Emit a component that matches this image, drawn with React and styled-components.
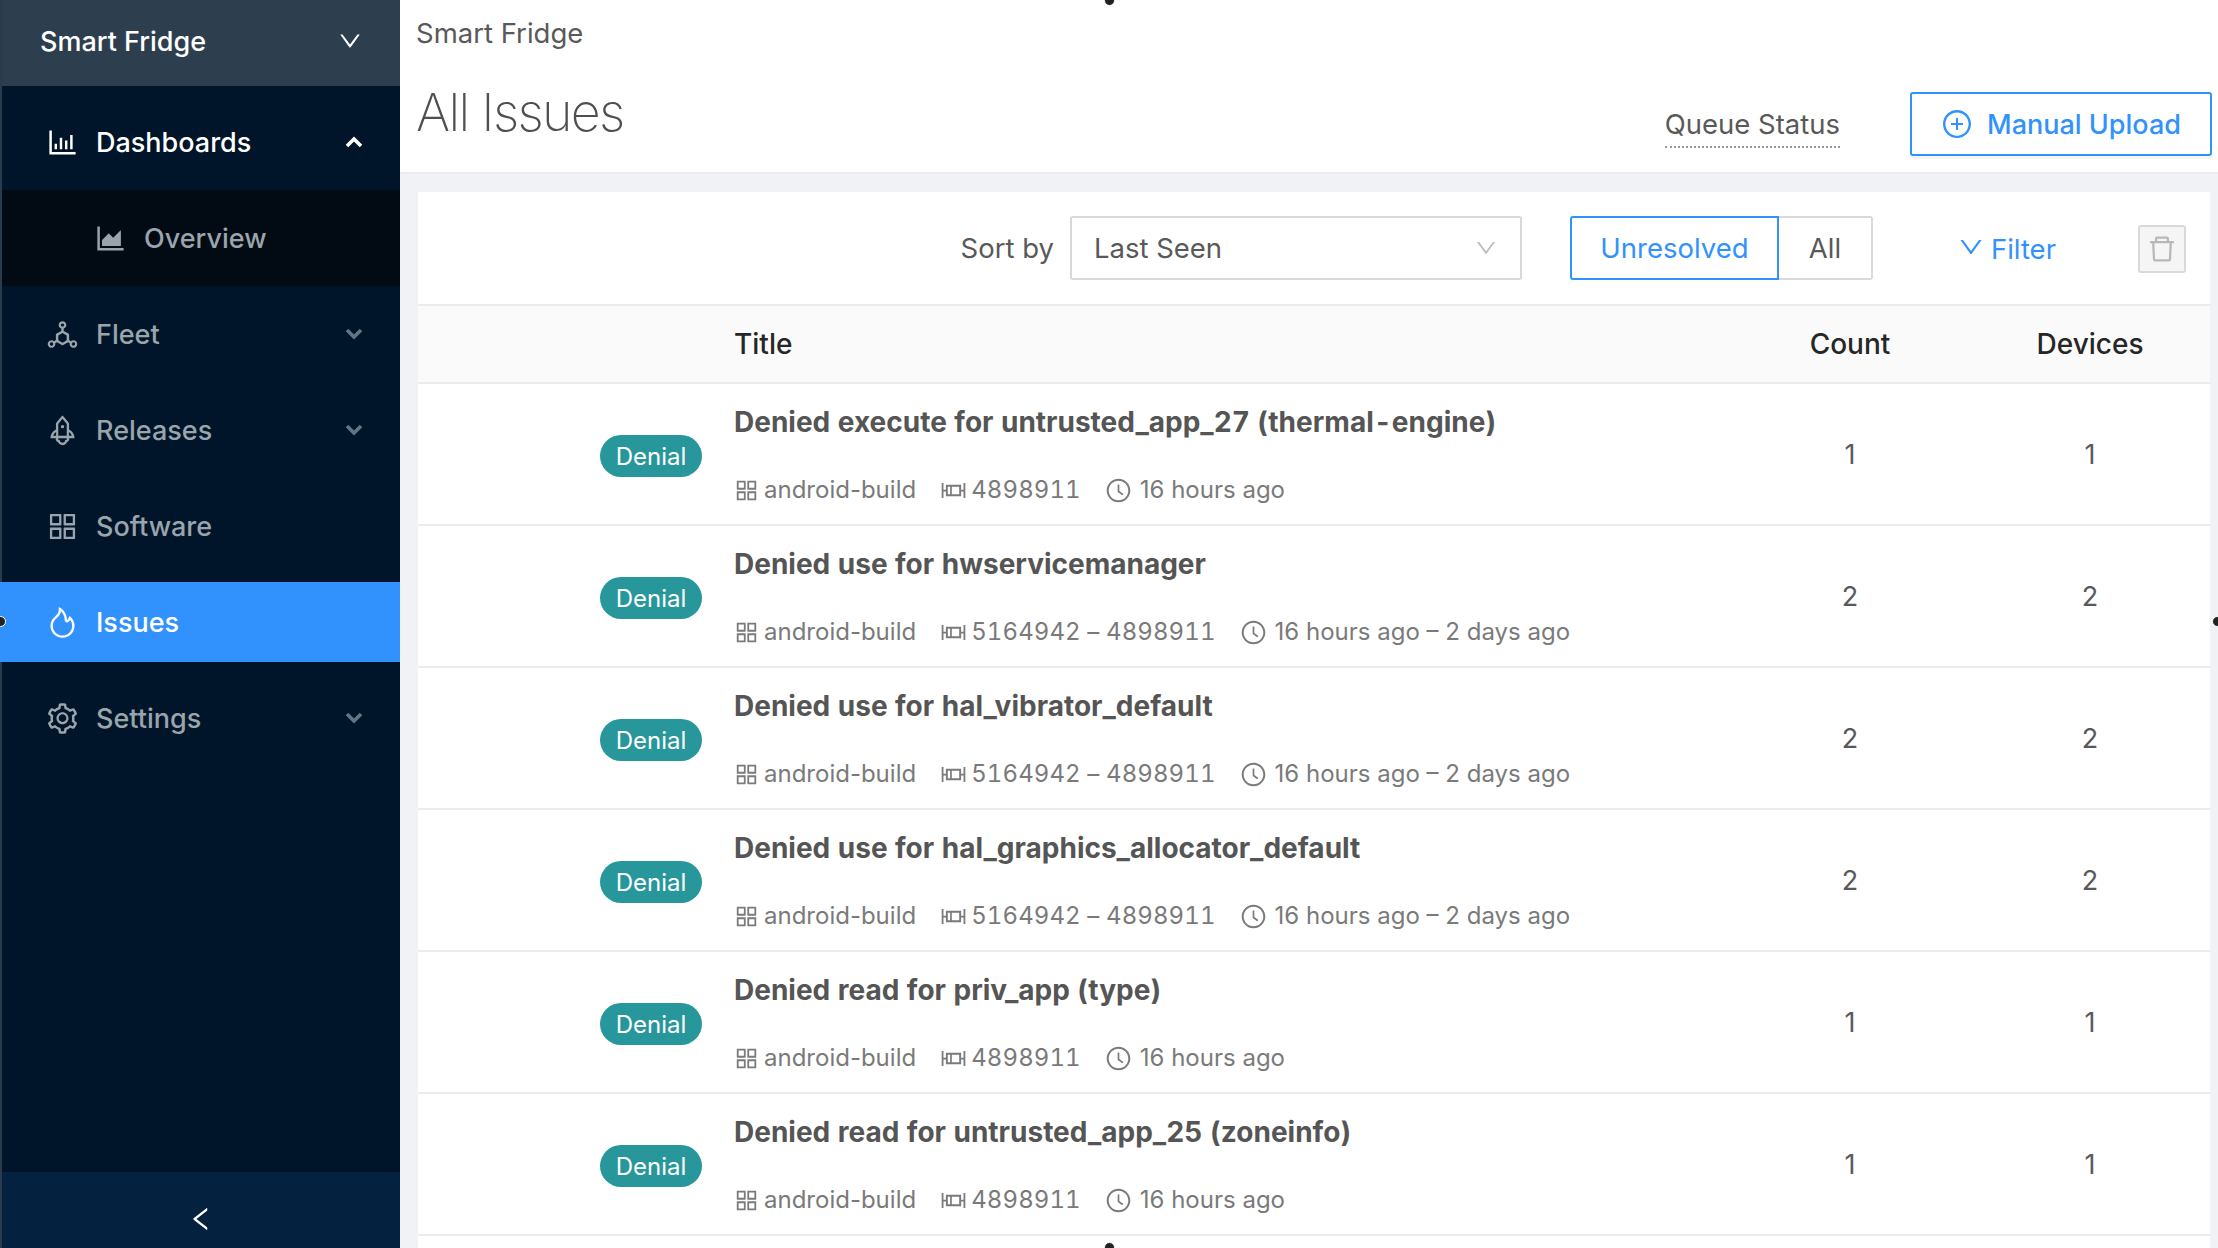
import React from 'react';
import styled, {createGlobalStyle} from 'styled-components';
import {
    AiOutlineBarChart, AiOutlineAreaChart, AiOutlineDeploymentUnit, AiOutlineRocket,
    AiOutlineAppstore, AiOutlineFire, AiOutlineSetting, AiOutlineDown, AiOutlineLeft,
    AiOutlinePlusCircle, AiOutlineDelete, AiOutlineClockCircle, AiOutlineBoxPlot,
} from 'react-icons/ai';

const issues = [
    {title: 'Denied execute for untrusted_app_27 (thermal-engine)', build: '4898911', seen: '16 hours ago', count: 1},
    {title: 'Denied use for hwservicemanager', build: '5164942 – 4898911', seen: '16 hours ago – 2 days ago', count: 2},
    {title: 'Denied use for hal_vibrator_default', build: '5164942 – 4898911', seen: '16 hours ago – 2 days ago', count: 2},
    {title: 'Denied use for hal_graphics_allocator_default', build: '5164942 – 4898911', seen: '16 hours ago – 2 days ago', count: 2},
    {title: 'Denied read for priv_app (type)', build: '4898911', seen: '16 hours ago', count: 1},
    {title: 'Denied read for untrusted_app_25 (zoneinfo)', build: '4898911', seen: '16 hours ago', count: 1},
];

const nav = [
    {label: 'Fleet', Icon: AiOutlineDeploymentUnit, arrow: true},
    {label: 'Releases', Icon: AiOutlineRocket, arrow: true},
    {label: 'Software', Icon: AiOutlineAppstore},
    {label: 'Issues', Icon: AiOutlineFire, active: true},
    {label: 'Settings', Icon: AiOutlineSetting, arrow: true},
];

// small bold chevron used by the menu rows
const Chevron = ({up}) => (
    <ArrowSvg viewBox="0 0 18 12">
        <polyline points={up ? '2,10 9,3 16,10' : '2,2 9,9 16,2'} fill="none" stroke="currentColor" strokeWidth="3.6" />
    </ArrowSvg>
);

const App = () => {
    return (
        <>
        <GlobalStyle />
        <Page>
            <Sidebar>
                <AppSelect>
                    <span>Smart Fridge</span>
                    <AiOutlineDown />
                </AppSelect>
                <Menu>
                    <MenuItem $open>
                        <MenuIcon><AiOutlineBarChart /></MenuIcon>
                        <MenuLabel>Dashboards</MenuLabel>
                        <Chevron up />
                    </MenuItem>
                    <SubItem>
                        <MenuIcon><AiOutlineAreaChart /></MenuIcon>
                        <MenuLabel>Overview</MenuLabel>
                    </SubItem>
                    {nav.map(({label, Icon, arrow, active}) => (
                        <MenuItem key={label} $active={active}>
                            <MenuIcon><Icon /></MenuIcon>
                            <MenuLabel>{label}</MenuLabel>
                            {arrow && <Chevron />}
                        </MenuItem>
                    ))}
                </Menu>
                <Collapse><AiOutlineLeft /></Collapse>
            </Sidebar>
            <Main>
                <TopBar>
                    <Crumb>Smart Fridge</Crumb>
                    <TitleRow>
                        <PageTitle>All Issues</PageTitle>
                        <TopActions>
                            <QueueLink>Queue Status</QueueLink>
                            <UploadButton><AiOutlinePlusCircle />Manual Upload</UploadButton>
                        </TopActions>
                    </TitleRow>
                </TopBar>
                <Card>
                    <Toolbar>
                        <SortLabel>Sort by</SortLabel>
                        <Select>
                            <span>Last Seen</span>
                            <AiOutlineDown />
                        </Select>
                        <Segments>
                            <Segment $selected>Unresolved</Segment>
                            <Segment>All</Segment>
                        </Segments>
                        <FilterLink><AiOutlineDown />Filter</FilterLink>
                        <TrashButton><AiOutlineDelete /></TrashButton>
                    </Toolbar>
                    <HeadRow>
                        <span />
                        <HeadCell>Title</HeadCell>
                        <HeadCell $center>Count</HeadCell>
                        <HeadCell $center>Devices</HeadCell>
                    </HeadRow>
                    {issues.map(issue => (
                        <Row key={issue.title}>
                            <BadgeCell><Badge>Denial</Badge></BadgeCell>
                            <Info>
                                <IssueTitle>{issue.title}</IssueTitle>
                                <Meta>
                                    <MetaItem><AiOutlineAppstore />android-build</MetaItem>
                                    <MetaItem><AiOutlineBoxPlot /><BuildNo>{issue.build}</BuildNo></MetaItem>
                                    <MetaItem $gap><AiOutlineClockCircle />{issue.seen}</MetaItem>
                                </Meta>
                            </Info>
                            <Num>{issue.count}</Num>
                            <Num>{issue.count}</Num>
                        </Row>
                    ))}
                </Card>
            </Main>
            <Handle $pos="top" />
            <Handle $pos="left" />
            <Handle $pos="right" />
            <Handle $pos="bottom" />
        </Page>
        </>
    )
}

const GlobalStyle = createGlobalStyle`
    * {
        box-sizing: border-box;
    }
    body {
        margin: 0;
        font-family: Inter, "Liberation Sans", sans-serif;
        background: #f0f2f5;
    }
`;

const Page = styled.div`
    position: relative;
    width: 2218px;
    height: 1248px;
    display: flex;
    overflow: hidden;
`;

const Sidebar = styled.aside`
    width: 400px;
    flex-shrink: 0;
    display: flex;
    flex-direction: column;
    background: #001529;
    border-left: 2px solid #2a3b4b;
`;

const AppSelect = styled.div`
    height: 86px;
    padding: 0 37px 4px 38px;
    display: flex;
    align-items: center;
    justify-content: space-between;
    background: #2d3f4f;
    color: #fff;
    font-size: 27px;
    font-weight: 500;
    svg {
        font-size: 26px;
    }
`;

const Menu = styled.nav`
    flex: 1;
    padding-top: 8px;
`;

const ArrowSvg = styled.svg`
    width: 18px;
    height: 12px;
    margin-left: auto;
`;

const MenuItem = styled.div`
    height: 96px;
    padding: 0 37px 0 42px;
    display: flex;
    align-items: center;
    font-size: 27px;
    font-weight: 500;
    color: ${p => (p.$open || p.$active ? '#fff' : '#9aa4ad')};
    background: ${p => (p.$active ? '#3192fe' : 'transparent')};
    ${p => p.$active && 'height: 80px; margin: 8px 0 8px -2px; padding-left: 44px;'}
    ${ArrowSvg} {
        color: ${p => (p.$open ? '#fff' : '#5f7683')};
    }
`;

const SubItem = styled(MenuItem)`
    padding-left: 90px;
    background: #020b13;
    color: #9aa4ad;
`;

const MenuIcon = styled.span`
    width: 36px;
    margin-right: 16px;
    display: flex;
    justify-content: center;
    font-size: 35px;
`;

const MenuLabel = styled.span`
    line-height: 1;
`;

const Collapse = styled.div`
    height: 76px;
    padding-top: 17px;
    display: flex;
    align-items: center;
    justify-content: center;
    background: #052140;
    color: #fff;
    font-size: 30px;
`;

const Main = styled.main`
    flex: 1;
    min-width: 0;
    display: flex;
    flex-direction: column;
`;

const TopBar = styled.header`
    height: 174px;
    flex-shrink: 0;
    padding: 16px 6px 0 16px;
    background: #fff;
    border-bottom: 2px solid #ebedf0;
`;

const Crumb = styled.div`
    font-size: 27.5px;
    line-height: 34px;
    color: #595959;
`;

const TitleRow = styled.div`
    display: flex;
    align-items: flex-start;
    justify-content: space-between;
`;

const PageTitle = styled.h1`
    margin: 32px 0 0;
    font-size: 52px;
    line-height: 62px;
    font-weight: 200;
    letter-spacing: -1.7px;
    color: #4f4f4f;
`;

const TopActions = styled.div`
    margin-top: 42px;
    display: flex;
    align-items: center;
    gap: 70px;
`;

const QueueLink = styled.span`
    font-size: 27.5px;
    line-height: 36px;
    color: #595959;
    border-bottom: 2px dotted #999;
    padding-bottom: 4px;
    margin-top: 6px;
`;

const UploadButton = styled.button`
    width: 302px;
    height: 64px;
    display: flex;
    align-items: center;
    justify-content: center;
    gap: 14px;
    background: #fff;
    border: 2px solid #3192fe;
    border-radius: 3px;
    box-shadow: 0 3px 0 rgba(0, 0, 0, 0.04);
    color: #3192fe;
    font: 500 27px Inter, sans-serif;
    svg {
        font-size: 32px;
    }
`;

const Card = styled.section`
    flex: 1;
    margin: 18px 8px 0 18px;
    background: #fff;
`;

const Toolbar = styled.div`
    height: 114px;
    padding: 0 24px 0 0;
    display: flex;
    align-items: center;
    border-bottom: 2px solid #ececec;
`;

const SortLabel = styled.span`
    margin-left: auto;
    margin-right: 16px;
    font-size: 27.5px;
    color: #595959;
`;

const Select = styled.div`
    width: 452px;
    height: 64px;
    padding: 0 22px;
    display: flex;
    align-items: center;
    justify-content: space-between;
    border: 2px solid #d9d9d9;
    border-radius: 3px;
    font-size: 27.5px;
    color: #595959;
    svg {
        font-size: 24px;
        color: #bfbfbf;
    }
`;

const Segments = styled.div`
    margin-left: 48px;
    display: flex;
`;

const Segment = styled.div`
    height: 64px;
    width: ${p => (p.$selected ? '209px' : '94px')};
    display: flex;
    align-items: center;
    justify-content: center;
    font-size: 27.5px;
    border: 2px solid ${p => (p.$selected ? '#3192fe' : '#d9d9d9')};
    border-left-width: ${p => (p.$selected ? '2px' : '0')};
    border-radius: ${p => (p.$selected ? '3px 0 0 3px' : '0 3px 3px 0')};
    color: ${p => (p.$selected ? '#3192fe' : '#595959')};
`;

const FilterLink = styled.div`
    margin-left: 84px;
    padding-top: 2px;
    display: flex;
    align-items: center;
    gap: 6px;
    font-size: 27.5px;
    color: #3192fe;
    svg {
        margin-top: -4px;
        font-size: 28px;
    }
`;

const TrashButton = styled.div`
    margin: 2px 0 0 82px;
    width: 48px;
    height: 48px;
    display: flex;
    align-items: center;
    justify-content: center;
    background: #f5f5f5;
    border: 2px solid #d9d9d9;
    border-radius: 3px;
    color: #b8b8b8;
    font-size: 32px;
`;

const Cols = styled.div`
    display: grid;
    grid-template-columns: 316px 1fr 240px 240px;
`;

const HeadRow = styled(Cols)`
    height: 78px;
    align-items: center;
    background: #fafafa;
    border-bottom: 2px solid #ececec;
`;

const HeadCell = styled.div`
    font-size: 28px;
    font-weight: 500;
    color: #262626;
    text-align: ${p => (p.$center ? 'center' : 'left')};
`;

const Row = styled(Cols)`
    height: 142px;
    border-bottom: 2px solid #ececec;
`;

const BadgeCell = styled.div`
    padding: 51px 32px 0 0;
    display: flex;
    justify-content: flex-end;
    align-items: flex-start;
`;

const Badge = styled.span`
    width: 102px;
    height: 42px;
    display: flex;
    align-items: center;
    justify-content: center;
    border-radius: 21px;
    background: #27979b;
    color: #fff;
    font-size: 24px;
`;

const Info = styled.div`
    padding-top: 20px;
    min-width: 0;
`;

const IssueTitle = styled.div`
    font-size: 28px;
    line-height: 36px;
    font-weight: 700;
    font-variant-numeric: tabular-nums;
    color: #555;
`;

const Meta = styled.div`
    margin: 34px 0 0 -1px;
    display: flex;
    gap: 24px;
`;

const MetaItem = styled.span`
    display: flex;
    align-items: center;
    gap: ${p => (p.$gap ? '8px' : '4px')};
    font-size: 24px;
    line-height: 32px;
    color: #7a7a7a;
    svg {
        font-size: 27px;
    }
`;

const BuildNo = styled.span`
    font-variant-numeric: tabular-nums;
    letter-spacing: 0.1px;
`;

const Num = styled.div`
    padding-top: 54px;
    text-align: center;
    font-size: 27px;
    color: #595959;
`;

const handlePlaces = {
    top: 'top: -5px; left: 1104px;',
    bottom: 'bottom: -5px; left: 1104px;',
    left: 'top: 616px; left: -5px;',
    right: 'top: 616px; right: -5px;',
};

const Handle = styled.span`
    position: absolute;
    width: 11px;
    height: 11px;
    border-radius: 50%;
    background: #222;
    border: 1px solid #fff;
    ${p => handlePlaces[p.$pos]}
`;

export default App;
